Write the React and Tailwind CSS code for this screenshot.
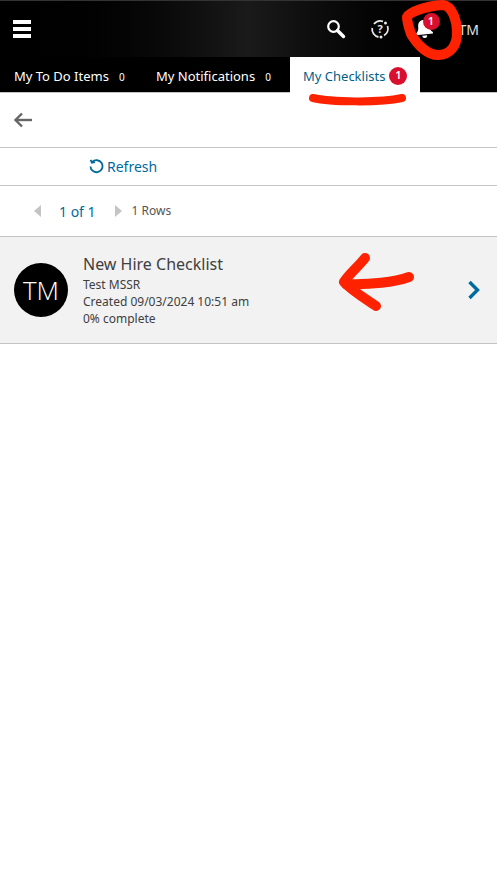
import React from 'react';

const App = () => {
  return (
    <div className="relative h-[875px] w-[497px] overflow-hidden bg-white font-['Noto_Sans',sans-serif] text-[#404040]">
      {/* top bar */}
      <div className="flex h-[57px] items-center justify-between border-t border-[#333] bg-gradient-to-r from-black via-[#1a1a1a] to-black">
        <button className="ml-[13px] flex w-[18px] flex-col gap-[3px]">
          <span className="h-[4px] bg-white" />
          <span className="h-[4px] bg-white" />
          <span className="h-[4px] bg-white" />
        </button>
        <div className="flex items-center">
          <svg width="20" height="20" viewBox="0 0 20 20" className="mr-[24px]" fill="none" stroke="white">
            <circle cx="7.5" cy="7.5" r="5.3" strokeWidth="2.2" />
            <path d="M11.500 11.500l6 6" strokeWidth="3.4" strokeLinecap="round" />
          </svg>
          <svg width="20" height="20" viewBox="0 0 20 20" className="mr-[24px]" fill="none" stroke="#e8e8e8" strokeWidth="1.8">
            <path d="M4 5A8 8 0 0 1 13 2.400" />
            <path d="M17.500 7A8 8 0 0 1 14 16.500" />
            <path d="M8.500 18A8 8 0 0 1 2.200 9" />
            <circle cx="15.500" cy="4" r="1.500" fill="#e8e8e8" stroke="none" />
            <circle cx="11" cy="18" r="1.500" fill="#e8e8e8" stroke="none" />
            <text x="10" y="13.500" textAnchor="middle" fontSize="11" fontWeight="700" fill="#e8e8e8" stroke="none" fontFamily="Noto Sans">?</text>
          </svg>
          <div className="relative mr-[25px] h-[20px] w-[20px]">
            <svg width="20" height="20" viewBox="0 0 20 20" fill="white" className="-rotate-6">
              <path d="M10 1c-3.600 0-5.500 2.800-5.500 6 0 3.400-.9 5.200-3 7v1.400h17V14c-2.100-1.800-3-3.600-3-7 0-3.200-1.900-6-5.500-6z" />
              <path d="M7.500 16.500a2.500 2.500 0 0 0 5 0z" />
            </svg>
            <span className="absolute left-[9px] top-[-6px] flex h-[17px] w-[17px] items-center justify-center rounded-full bg-[#d8102e] text-[11px] font-semibold text-white">1</span>
          </div>
          <span className="mr-[18px] text-[14px] text-[#e0e0e0]">TM</span>
        </div>
      </div>

      {/* tabs */}
      <div className="flex h-[36px] items-stretch border-b border-[#c4c4c4] bg-black pt-[5px] text-[13px]">
        <div className="flex w-[156px] items-center pl-[14px] text-white">
          <span>My To Do Items</span>
          <span className="ml-[10px] text-[10px]">0</span>
        </div>
        <div className="flex w-[134px] items-center text-white">
          <span>My Notifications</span>
          <span className="ml-[10px] text-[10px]">0</span>
        </div>
        <div className="mb-[-1px] mt-[-5px] flex w-[130px] items-center bg-white pl-[13px] pt-[4px] text-[#005f87]">
          <span>My Checklists</span>
          <span className="mb-[3px] ml-[4px] flex h-[18px] w-[18px] items-center justify-center rounded-full bg-[#d8102e] text-[11px] font-semibold text-white">1</span>
        </div>
      </div>

      {/* back */}
      <div className="flex h-[55px] items-center border-b border-[#c4c4c4] pl-[13px]">
        <svg width="19" height="16" viewBox="0 0 19 16" fill="none" stroke="#666" strokeWidth="2.400">
          <path d="M19 8H2.500" />
          <path d="M9 1.500L2.500 8 9 14.500" />
        </svg>
      </div>

      {/* refresh */}
      <div className="flex h-[38px] items-center border-b border-[#c4c4c4] pl-[89px] text-[14px] text-[#006a9e]">
        <svg width="15" height="15" viewBox="0 0 14 14" fill="none" stroke="#006a9e" strokeWidth="1.700" className="mr-[3px]">
          <path d="M3 2.800A5.600 5.600 0 1 1 1.400 7" />
          <path d="M1.500 .8L2.700 3.400 5.500 2.900" />
        </svg>
        <span>Refresh</span>
      </div>

      {/* pagination */}
      <div className="flex h-[51px] items-center border-b border-[#c4c4c4] pl-[34px]">
        <span className="h-0 w-0 border-y-[6px] border-r-[7px] border-y-transparent border-r-[#c4c4c4]" />
        <span className="ml-[18px] text-[14px] text-[#006a9e]">1 of 1</span>
        <span className="ml-[19px] h-0 w-0 border-y-[6px] border-l-[7px] border-y-transparent border-l-[#c4c4c4]" />
        <span className="ml-[10px] text-[12px] text-[#555]">1 Rows</span>
      </div>

      {/* checklist row */}
      <div className="flex h-[107px] items-center border-b border-[#c4c4c4] bg-[#f2f2f2] pl-[14px]">
        <div className="flex h-[54px] w-[54px] items-center justify-center rounded-full bg-black font-['Open_Sans',sans-serif] text-[26px] font-light text-white">TM</div>
        <div className="ml-[15px] flex-1 text-[12px] leading-[17px] text-[#404040]">
          <div className="mb-[1px] text-[16px] leading-[22px]">New Hire Checklist</div>
          <div>Test MSSR</div>
          <div>Created 09/03/2024 10:51 am</div>
          <div>0% complete</div>
        </div>
        <svg width="14" height="20" viewBox="0 0 14 20" fill="none" stroke="#006a9e" strokeWidth="3.400" className="mr-[16px]">
          <path d="M2.500 2L10.500 10 2.500 18" />
        </svg>
      </div>

      {/* red marker scribbles */}
      <svg width="497" height="875" viewBox="0 0 497 875" fill="none" stroke="#ff2200" strokeLinecap="round" strokeLinejoin="round" className="pointer-events-none absolute left-0 top-0">
        <path d="M407 17C410 12 425 6 443 5 452 6 457 20 457 33 457 46 450 55 438 55 428 55 418 46 411 34 409 28 407 22 407 17Z" strokeWidth="10" />
        <path d="M313 98C330 102 380 103 402 98" strokeWidth="8" />
        <path d="M365 258C358 267 349 274 344 282 352 291 366 299 376 306" strokeWidth="10" />
        <path d="M346 284C370 285 395 282 409 277" strokeWidth="10" />
      </svg>
    </div>
  );
};

export default App;
